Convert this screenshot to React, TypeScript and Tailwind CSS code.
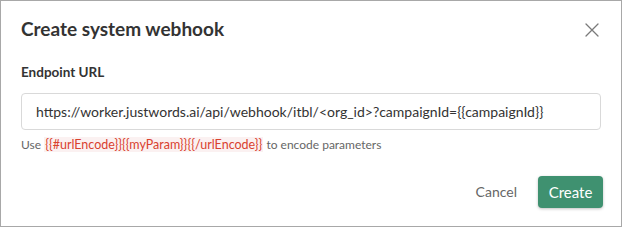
import React from "react";

export default function App() {
  return (
    <div className="w-[623px] h-[228px] bg-white">
      <div
        className="w-[622px] h-[227px] border border-[#a8a8a8] bg-white text-[#333333] flex flex-col"
        style={{ fontFamily: "Lato, 'Noto Sans', sans-serif" }}
      >
        <div className="flex items-center justify-between pl-[20px] pr-[22px] pt-[14px]">
          <h1 className="text-[19px] font-bold leading-[28px] text-[#333333]">Create system webhook</h1>
          <svg width="14" height="14" viewBox="0 0 14 14" className="mt-[2px]">
            <path d="M1 1 L13 13 M13 1 L1 13" stroke="#7a7a7a" strokeWidth="1.3" strokeLinecap="round" />
          </svg>
        </div>
        <div className="px-[20px] pt-[19px]">
          <div className="text-[13.5px] font-bold leading-[20px] text-[#333333]">Endpoint URL</div>
          <div className="mt-[11px] h-[37px] rounded-[4px] border border-[#d9d9d9] flex items-center pl-[14px] text-[14px] text-[#333333]">
            https://worker.justwords.ai/api/webhook/itbl/&lt;org_id&gt;?campaignId=&#123;&#123;campaignId&#125;&#125;
          </div>
          <div className="mt-[7px] text-[12px] leading-[16px] text-[#666666]">
            Use{" "}
            <span className="text-[12.5px] text-[#d9412f] bg-[#fbf1f1] px-[1px]">
              &#123;&#123;#urlEncode&#125;&#125;&#123;&#123;myParam&#125;&#125;&#123;&#123;/urlEncode&#125;&#125;
            </span>{" "}
            to encode parameters
          </div>
        </div>
        <div className="flex items-center justify-end gap-[21px] pr-[18px] mt-[23px]">
          <button className="text-[14px] text-[#666666] leading-[20px]">Cancel</button>
          <button className="h-[32px] w-[65px] rounded-[4px] bg-[#3f9170] text-white text-[15px] shadow-[0_1px_3px_rgba(0,0,0,0.25)]">
            Create
          </button>
        </div>
      </div>
    </div>
  );
}
